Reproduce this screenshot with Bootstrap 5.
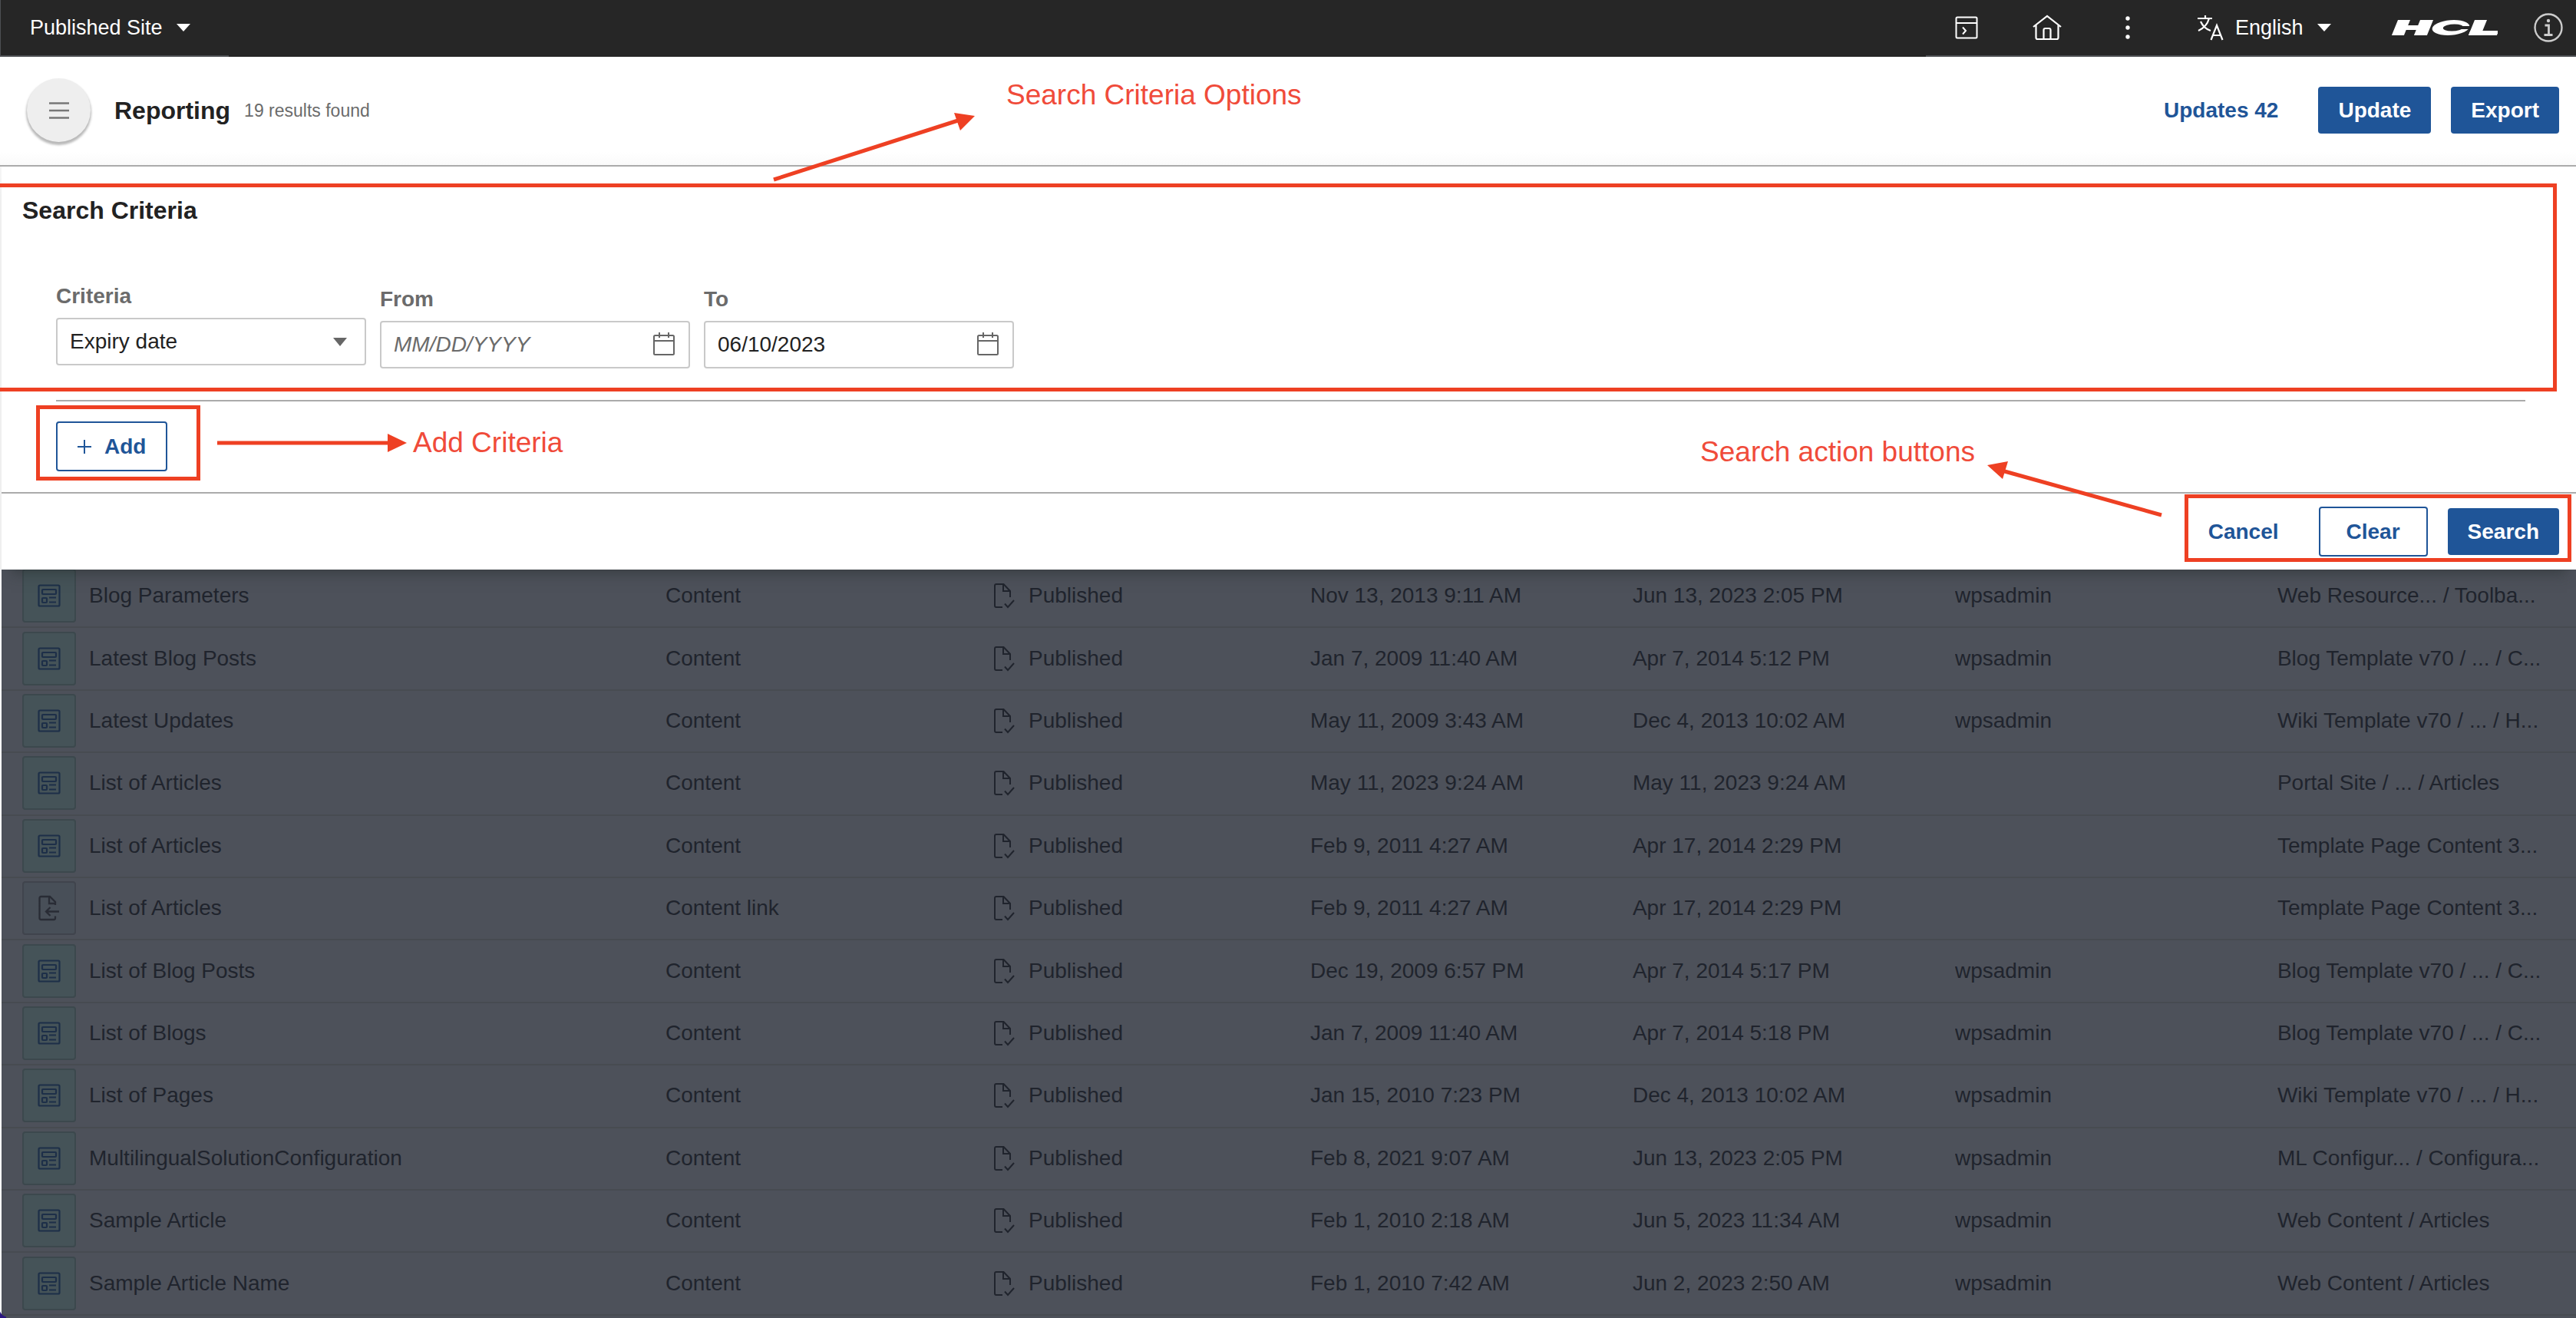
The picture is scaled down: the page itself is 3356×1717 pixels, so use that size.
<!DOCTYPE html>
<html lang="en">
<head>
<meta charset="utf-8">
<meta name="viewport" content="width=device-width, initial-scale=1">
<title>Reporting</title>
<link href="https://cdn.jsdelivr.net/npm/bootstrap@5.3.0/dist/css/bootstrap.min.css" rel="stylesheet">
<style>
:root { --brand: #1f5598; --note: #ee4023; --rule: #ababab; }
body { font-family: "Liberation Sans", Arial, sans-serif; font-size: 28px; line-height: 36px; color: #222; background: #fff; }
svg { display: block; flex: none; }

/* top bar */
.topbar { height: 74px; background: #262626; color: #fff; }
.topbar-part { border-bottom: 2px solid #4d4f53; }
.site-part { width: 298px; padding-left: 38px; border-left: 1px solid #4d4f53; }
.bar-select { appearance: none; border: 0; color: #fff; font-size: 27px; line-height: 36px; padding: 0 36px 0 0;
  background: transparent url("data:image/svg+xml,%3Csvg xmlns='http://www.w3.org/2000/svg' viewBox='0 0 18 10'%3E%3Cpath fill='%23fff' d='M0 0h18L9 10z'/%3E%3C/svg%3E") no-repeat right center / 18px 10px; }
.bar-select option { color: #222; }
.bar-btn { width: 105px; background: none; border: 0; padding: 0; color: #fff; }
.lang-part { gap: 15px; padding-left: 38px; }
.brand-logo { margin-left: 79px; margin-right: 47px; }
.info-btn { background: none; border: 0; padding: 0; margin-right: 17px; color: #ccc; }

/* title bar */
.titlebar { height: 143px; border-bottom: 2px solid var(--rule); padding: 0 22px 2px 35px; gap: 26px;
  background: linear-gradient(#fff 88%, #fafafa); }
.menu-btn { width: 83px; height: 83px; border: 0; border-radius: 50%; background: #eee; color: #777;
  box-shadow: 0 3px 3px 1px rgba(0,0,0,.28); }
.page-title { font-size: 32px; line-height: 40px; font-weight: 700; margin: 0 18px 0 5px; }
.result-count { font-size: 23px; color: #6b6b6b; }

/* buttons */
.act { font-size: 28px; line-height: 35px; font-weight: 700; border-radius: 4px; padding: 13px 26px; border: 0; }
.act-solid, .act-solid:hover { background: var(--brand); color: #fff; }
.act-text, .act-text:hover { color: var(--brand); background: none; text-decoration: none; }
.act-line, .act-line:hover { color: var(--brand); background: #fff; border: 2px solid var(--brand); padding: 13px 34px; }
.act-add { padding: 13px 26px 13px 25px; }

/* search panel */
.panel { margin-left: 2px; background: #fff; z-index: 1; box-shadow: 0 18px 16px -12px rgba(40,48,48,.5), -2px 0 0 #f5f5f5; }
.criteria { padding: 37px 66px 41px 27px; }
.criteria h2 { font-size: 32px; line-height: 40px; font-weight: 700; margin: 0 0 74px; }
.field-row { gap: 18px; padding-left: 44px; }
.field { width: 404px; }
.field label { font-weight: 700; color: #6b6b6b; margin-bottom: 10px; display: block; }
.box { width: 100%; height: 62px; border: 2px solid #c9c9c9; border-radius: 4px; background-color: #fff; color: #222; padding: 0 16px; }
.box::placeholder { font-style: italic; color: #6b6b6b; opacity: 1; }
select.box { appearance: none; background: #fff url("data:image/svg+xml,%3Csvg xmlns='http://www.w3.org/2000/svg' viewBox='0 0 18 11'%3E%3Cpath fill='%23666' d='M0 0h18L9 11z'/%3E%3C/svg%3E") no-repeat right 23px center / 18px 11px; }
.cal { right: 20px; top: 15px; color: #666; }
.add-bar { margin: 0 66px 0 71px; border-top: 2px solid var(--rule); padding: 26px 0 27px; }
.panel-foot { border-top: 2px solid var(--rule); padding: 17px 22px; gap: 26px; }

/* callouts drawn over the page */
.ring { position: absolute; border: 5px solid var(--note); pointer-events: none; }
.ring-criteria { left: -8px; right: 25px; top: 22px; bottom: 11px; }
.ring-add { left: -26px; top: 5px; width: 214px; height: 98px; }
.ring-actions { right: 6px; top: 1px; bottom: 10px; width: 504px; }
.note { position: absolute; font-size: 37px; line-height: 44px; color: #f04b3a; white-space: nowrap; z-index: 2; }
.arrow { position: absolute; z-index: 2; pointer-events: none; color: var(--note); }
.arrow-options { left: 1004px; top: 70px; }
.note-options { left: 1311px; top: 28px; }
.arrow-add { left: 210px; top: 41px; }
.note-add { left: 465px; top: 32px; }
.arrow-actions { right: 538px; top: -46px; }
.note-actions { right: 783px; top: -76px; }

/* results behind the panel */
.results { margin: -5px 0 0 2px; padding-bottom: 3px; background: #4d515a; }
.results-table { --bs-table-bg: transparent; --bs-table-color: #20242d; color: #20242d; table-layout: fixed; border-collapse: separate; border-spacing: 0; margin: 0; }
.results-table td { padding: 0 0 1px; border: 0; border-bottom: 2px solid #474b51; white-space: nowrap; overflow: hidden; vertical-align: middle; }
.results-table td:first-child { padding-left: 27px; }
.c-name { width: 25.79%; }
.c-std { width: 12.522%; }
.tile { width: 70px; height: 70px; border: 2px solid #3c484d; border-radius: 4px; background: #455358; color: #1d2f48; flex: none; }
.tile-link { background: #484f58; border-color: #40444d; color: #292c35; }
.row-name { gap: 17px; }
.status { gap: 18px; padding-left: 7px; }
.corner { position: absolute; left: 0; bottom: 0; width: 8px; height: 12px; background: radial-gradient(circle at 10px 0, transparent 10px, #2a1680 11px); }
</style>
</head>
<body>
<svg width="0" height="0" class="position-absolute" aria-hidden="true">
  <symbol id="i-content" viewBox="0 0 30 30" fill="none" stroke="currentColor" stroke-width="2.2">
    <rect x="1.5" y="1.5" width="27" height="27" rx="1.5"/><rect x="6" y="7" width="18" height="6" rx="1"/>
    <rect x="6" y="18" width="6" height="6" rx="1"/><path d="M15 17.5h9M15 23.5h9"/>
  </symbol>
  <symbol id="i-link" viewBox="0 0 30 34" fill="none" stroke="currentColor" stroke-width="2.3">
    <path d="M23 13V9l-7-7H4.500Q2.500 2 2.500 4v26q0 2 2 2H21q2 0 2-2v-2.500M15 2v9h8M28 21.500H11.500M16.500 16l-5.500 5.500 5.500 5.500"/>
  </symbol>
  <symbol id="i-published" viewBox="0 0 28 34" fill="none" stroke="currentColor" stroke-width="2">
    <path d="M22 19V11l-8.500-9H4Q2 2 2 4v26q0 2 2 2h8M13 2v9h9M15 27.500l4 4.500 8-9"/>
  </symbol>
  <symbol id="i-cal" viewBox="0 0 28 30" fill="none" stroke="currentColor" stroke-width="2">
    <rect x="1" y="4" width="26" height="25" rx="1.500"/><path d="M1 11h26M8 0v7M20 0v7"/>
  </symbol>
</svg>

<div class="d-flex flex-column min-vh-100 position-relative">
  <header class="topbar d-flex justify-content-between">
    <div class="topbar-part site-part d-flex align-items-center">
      <select class="bar-select" aria-label="Site"><option>Published Site</option></select>
    </div>
    <div class="topbar-part d-flex align-items-center">
      <button class="bar-btn d-flex justify-content-center" type="button">
        <svg width="30" height="30" viewBox="0 0 30 30" fill="none" stroke="currentColor" stroke-width="2"><rect x="1.500" y="1.500" width="27" height="27" rx="1.500"/><path d="M2 9h26M10 14.500l4 4.500-4 4.500"/></svg>
      </button>
      <button class="bar-btn d-flex justify-content-center" type="button">
        <svg width="38" height="34" viewBox="0 0 38 34" fill="none" stroke="currentColor" stroke-width="2.200"><path d="M1 16L19 2l18 14M4.500 14v16q0 2 2 2h25q2 0 2-2V14M14.500 32V20q0-2 2-2h5q2 0 2 2v12"/></svg>
      </button>
      <button class="bar-btn d-flex justify-content-center" type="button">
        <svg width="6" height="30" viewBox="0 0 6 30" fill="currentColor"><circle cx="3" cy="3" r="2.700"/><circle cx="3" cy="15" r="2.700"/><circle cx="3" cy="27" r="2.700"/></svg>
      </button>
      <div class="lang-part d-flex align-items-center">
        <svg width="35" height="34" viewBox="0 0 35 34" fill="none" stroke="currentColor" stroke-width="2.200"><path d="M1 5h19M11 1v4M16 5q-3 11-14 16M5 9q4 9 13 12M18.500 33l7.500-19 7.500 19M21 27h10"/></svg>
        <select class="bar-select" aria-label="Language"><option>English</option></select>
      </div>
      <!-- slanted company mark: bars and an open ring -->
      <svg class="brand-logo" width="138" height="20" viewBox="0 0 138 20" role="img" fill="none" stroke="#fff">
        <g transform="translate(8 0) skewX(-22)"><rect x="0" y="0" width="16" height="20" fill="#fff" stroke="none"/><rect x="29" y="0" width="17" height="20" fill="#fff" stroke="none"/><rect x="10" y="7" width="22" height="6" fill="#fff" stroke="none"/>
        <ellipse cx="73" cy="10" rx="24" ry="10" fill="#fff" stroke="none"/><ellipse cx="76" cy="10" rx="13" ry="4.500" fill="#262626" stroke="none"/><rect x="84" y="8" width="14" height="4" fill="#262626" stroke="none"/>
        <rect x="100" y="0" width="16" height="20" fill="#fff" stroke="none"/><rect x="100" y="14" width="37" height="6" fill="#fff" stroke="none"/></g>
      </svg>
      <button class="info-btn" type="button">
        <svg width="38" height="38" viewBox="0 0 38 38" fill="none" stroke="currentColor" stroke-width="2.400"><circle cx="19" cy="19" r="17.500"/><path d="M14.500 16h5v12M13.500 28.500h11" stroke-width="2.800"/><circle cx="19" cy="10" r="2.200" fill="currentColor" stroke="none"/></svg>
      </button>
    </div>
  </header>

  <div class="titlebar d-flex align-items-center position-relative">
    <button class="menu-btn d-flex align-items-center justify-content-center" type="button">
      <svg width="26" height="22" viewBox="0 0 26 22" stroke="currentColor" stroke-width="2.400"><path d="M0 1.500h26M0 11h26M0 20.500h26"/></svg>
    </button>
    <div class="d-flex align-items-center me-auto">
      <h1 class="page-title">Reporting</h1><span class="result-count">19 results found</span>
    </div>
    <a class="act act-text" href="#">Updates 42</a>
    <button class="btn act act-solid" type="button">Update</button>
    <button class="btn act act-solid" type="button">Export</button>
    <svg class="arrow arrow-options" width="270" height="94" viewBox="0 0 270 94"><path d="M4 90L244 13" stroke="currentColor" stroke-width="5"/><path d="M239 3l27 4-19 19z" fill="currentColor"/></svg>
    <div class="note note-options">Search Criteria Options</div>
  </div>

  <main class="d-flex flex-column flex-fill">
    <form class="panel position-relative">
      <section class="criteria position-relative">
        <h2>Search Criteria</h2>
        <div class="field-row d-flex align-items-start">
          <div class="field">
            <label for="criteria">Criteria</label>
            <select id="criteria" class="box"><option>Expiry date</option></select>
          </div>
          <div class="field pt-1">
            <label for="from">From</label>
            <div class="position-relative"><input id="from" class="box" type="text" placeholder="MM/DD/YYYY"><svg class="cal position-absolute" width="28" height="30"><use href="#i-cal"/></svg></div>
          </div>
          <div class="field pt-1">
            <label for="to">To</label>
            <div class="position-relative"><input id="to" class="box" type="text" value="06/10/2023"><svg class="cal position-absolute" width="28" height="30"><use href="#i-cal"/></svg></div>
          </div>
        </div>
        <span class="ring ring-criteria"></span>
      </section>
      <div class="add-bar position-relative">
        <button class="btn act act-line act-add d-flex align-items-center" type="button">
          <svg class="me-3" width="20" height="20" viewBox="0 0 20 20" stroke="currentColor" stroke-width="2"><path d="M10 1v18M1 10h18"/></svg>Add
        </button>
        <span class="ring ring-add"></span>
        <svg class="arrow arrow-add" width="248" height="26" viewBox="0 0 248 26"><path d="M0 13h226" stroke="currentColor" stroke-width="5"/><path d="M222 1l25 12-25 12z" fill="currentColor"/></svg>
        <div class="note note-add">Add Criteria</div>
      </div>
      <div class="panel-foot d-flex align-items-center justify-content-end position-relative">
        <button class="btn act act-text" type="button">Cancel</button>
        <button class="btn act act-line" type="reset">Clear</button>
        <button class="btn act act-solid" type="submit">Search</button>
        <span class="ring ring-actions"></span>
        <svg class="arrow arrow-actions" width="232" height="78" viewBox="0 0 232 78"><path d="M22 16L230 74" stroke="currentColor" stroke-width="5"/><path d="M3 9l27-5-7 23z" fill="currentColor"/></svg>
        <div class="note note-actions">Search action buttons</div>
      </div>
    </form>

    <div class="results d-flex flex-fill">
      <table class="table results-table w-100">
        <colgroup><col class="c-name"><col class="c-std"><col class="c-std"><col class="c-std"><col class="c-std"><col class="c-std"><col></colgroup>
        <tbody>
          <tr><td><div class="row-name d-flex align-items-center"><span class="tile d-flex align-items-center justify-content-center"><svg width="30" height="30"><use href="#i-content"/></svg></span>Blog Parameters</div></td><td>Content</td><td><div class="status d-flex align-items-center"><svg width="28" height="34"><use href="#i-published"/></svg>Published</div></td><td>Nov 13, 2013 9:11 AM</td><td>Jun 13, 2023 2:05 PM</td><td>wpsadmin</td><td>Web Resource... / Toolba...</td></tr>
          <tr><td><div class="row-name d-flex align-items-center"><span class="tile d-flex align-items-center justify-content-center"><svg width="30" height="30"><use href="#i-content"/></svg></span>Latest Blog Posts</div></td><td>Content</td><td><div class="status d-flex align-items-center"><svg width="28" height="34"><use href="#i-published"/></svg>Published</div></td><td>Jan 7, 2009 11:40 AM</td><td>Apr 7, 2014 5:12 PM</td><td>wpsadmin</td><td>Blog Template v70 / ... / C...</td></tr>
          <tr><td><div class="row-name d-flex align-items-center"><span class="tile d-flex align-items-center justify-content-center"><svg width="30" height="30"><use href="#i-content"/></svg></span>Latest Updates</div></td><td>Content</td><td><div class="status d-flex align-items-center"><svg width="28" height="34"><use href="#i-published"/></svg>Published</div></td><td>May 11, 2009 3:43 AM</td><td>Dec 4, 2013 10:02 AM</td><td>wpsadmin</td><td>Wiki Template v70 / ... / H...</td></tr>
          <tr><td><div class="row-name d-flex align-items-center"><span class="tile d-flex align-items-center justify-content-center"><svg width="30" height="30"><use href="#i-content"/></svg></span>List of Articles</div></td><td>Content</td><td><div class="status d-flex align-items-center"><svg width="28" height="34"><use href="#i-published"/></svg>Published</div></td><td>May 11, 2023 9:24 AM</td><td>May 11, 2023 9:24 AM</td><td></td><td>Portal Site / ... / Articles</td></tr>
          <tr><td><div class="row-name d-flex align-items-center"><span class="tile d-flex align-items-center justify-content-center"><svg width="30" height="30"><use href="#i-content"/></svg></span>List of Articles</div></td><td>Content</td><td><div class="status d-flex align-items-center"><svg width="28" height="34"><use href="#i-published"/></svg>Published</div></td><td>Feb 9, 2011 4:27 AM</td><td>Apr 17, 2014 2:29 PM</td><td></td><td>Template Page Content 3...</td></tr>
          <tr><td><div class="row-name d-flex align-items-center"><span class="tile tile-link d-flex align-items-center justify-content-center"><svg width="30" height="34"><use href="#i-link"/></svg></span>List of Articles</div></td><td>Content link</td><td><div class="status d-flex align-items-center"><svg width="28" height="34"><use href="#i-published"/></svg>Published</div></td><td>Feb 9, 2011 4:27 AM</td><td>Apr 17, 2014 2:29 PM</td><td></td><td>Template Page Content 3...</td></tr>
          <tr><td><div class="row-name d-flex align-items-center"><span class="tile d-flex align-items-center justify-content-center"><svg width="30" height="30"><use href="#i-content"/></svg></span>List of Blog Posts</div></td><td>Content</td><td><div class="status d-flex align-items-center"><svg width="28" height="34"><use href="#i-published"/></svg>Published</div></td><td>Dec 19, 2009 6:57 PM</td><td>Apr 7, 2014 5:17 PM</td><td>wpsadmin</td><td>Blog Template v70 / ... / C...</td></tr>
          <tr><td><div class="row-name d-flex align-items-center"><span class="tile d-flex align-items-center justify-content-center"><svg width="30" height="30"><use href="#i-content"/></svg></span>List of Blogs</div></td><td>Content</td><td><div class="status d-flex align-items-center"><svg width="28" height="34"><use href="#i-published"/></svg>Published</div></td><td>Jan 7, 2009 11:40 AM</td><td>Apr 7, 2014 5:18 PM</td><td>wpsadmin</td><td>Blog Template v70 / ... / C...</td></tr>
          <tr><td><div class="row-name d-flex align-items-center"><span class="tile d-flex align-items-center justify-content-center"><svg width="30" height="30"><use href="#i-content"/></svg></span>List of Pages</div></td><td>Content</td><td><div class="status d-flex align-items-center"><svg width="28" height="34"><use href="#i-published"/></svg>Published</div></td><td>Jan 15, 2010 7:23 PM</td><td>Dec 4, 2013 10:02 AM</td><td>wpsadmin</td><td>Wiki Template v70 / ... / H...</td></tr>
          <tr><td><div class="row-name d-flex align-items-center"><span class="tile d-flex align-items-center justify-content-center"><svg width="30" height="30"><use href="#i-content"/></svg></span>MultilingualSolutionConfiguration</div></td><td>Content</td><td><div class="status d-flex align-items-center"><svg width="28" height="34"><use href="#i-published"/></svg>Published</div></td><td>Feb 8, 2021 9:07 AM</td><td>Jun 13, 2023 2:05 PM</td><td>wpsadmin</td><td>ML Configur... / Configura...</td></tr>
          <tr><td><div class="row-name d-flex align-items-center"><span class="tile d-flex align-items-center justify-content-center"><svg width="30" height="30"><use href="#i-content"/></svg></span>Sample Article</div></td><td>Content</td><td><div class="status d-flex align-items-center"><svg width="28" height="34"><use href="#i-published"/></svg>Published</div></td><td>Feb 1, 2010 2:18 AM</td><td>Jun 5, 2023 11:34 AM</td><td>wpsadmin</td><td>Web Content / Articles</td></tr>
          <tr><td><div class="row-name d-flex align-items-center"><span class="tile d-flex align-items-center justify-content-center"><svg width="30" height="30"><use href="#i-content"/></svg></span>Sample Article Name</div></td><td>Content</td><td><div class="status d-flex align-items-center"><svg width="28" height="34"><use href="#i-published"/></svg>Published</div></td><td>Feb 1, 2010 7:42 AM</td><td>Jun 2, 2023 2:50 AM</td><td>wpsadmin</td><td>Web Content / Articles</td></tr>
        </tbody>
      </table>
    </div>
  </main>
  <span class="corner"></span>
</div>
<script src="https://cdn.jsdelivr.net/npm/bootstrap@5.3.0/dist/js/bootstrap.bundle.min.js"></script>
</body>
</html>
